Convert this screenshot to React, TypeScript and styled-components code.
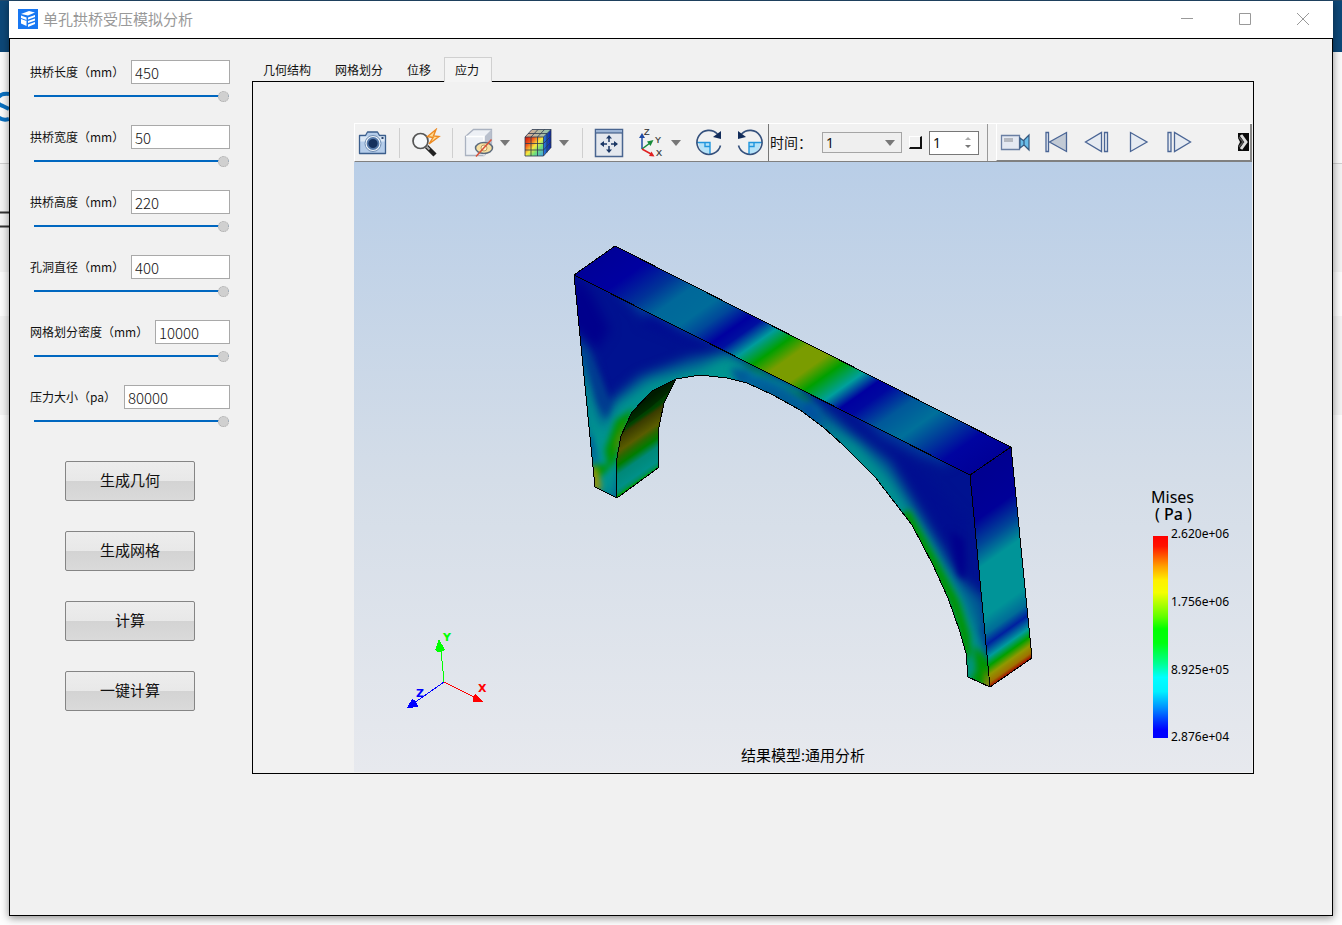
import React, { useState } from "react";
import styled, { createGlobalStyle } from "styled-components";

const sans = `"Noto Sans", "Noto Sans CJK SC", sans-serif`;
const cjk = `"Noto Sans CJK SC", "Noto Sans", sans-serif`;

const GlobalStyle = createGlobalStyle`
  *, *::before, *::after { box-sizing: border-box; }
  body { margin: 0; font-family: ${cjk}; color: #111; }
  button, input, select { font: inherit; color: inherit; margin: 0; }
`;

const Desktop = styled.div`
  position: relative;
  min-height: 100vh;
  padding: 1px 9px 9px;
  overflow: hidden;
  display: flex;
  background: linear-gradient(
    #234a6b 0 1px, #0d4878 1px 52px, #fafafa 52px 163px, #cfcfcf 163px 164px,
    #f3f3f3 164px 272px, #fcfcfc 272px 316px, #f3f3f3 316px 415px, #fdfdfd 415px
  );
`;

const BackdropArt = styled.svg`
  position: absolute;
  left: 0;
  top: 0;
`;

const Window = styled.div`
  position: relative;
  flex: 1;
  min-width: 0;
  display: flex;
  flex-direction: column;
  background: #f1f1f1;
  box-shadow: 0 2px 8px rgba(0, 0, 0, 0.45);
`;

const TitleBar = styled.header`
  height: 37px;
  flex: none;
  display: flex;
  align-items: center;
  padding: 0 20px 1px 9px;
  background: #fff;
  color: #999;
`;

const Title = styled.h1`
  flex: 1;
  margin: 0 0 0 5px;
  font-size: 15px;
  line-height: 20px;
  font-weight: 400;
`;

const CaptionButtons = styled.div`
  display: flex;
  gap: 38px;
`;

const PlainButton = styled.button`
  display: flex;
  align-items: center;
  padding: 0;
  border: 0;
  background: none;
`;

const Body = styled.main`
  flex: 1;
  display: flex;
  align-items: flex-start;
  gap: 22px;
  padding: 18px 78px 40px 20px;
  border: 1px solid #000;
`;

const Sidebar = styled.form`
  width: 200px;
  flex: none;
  padding-top: 3px;
`;

const Fields = styled.div`
  display: flex;
  flex-direction: column;
  gap: 23px;
`;

const FieldRow = styled.div`
  display: flex;
  align-items: center;
  justify-content: space-between;
  height: 24px;
  margin-bottom: 6px;
`;

const FieldLabel = styled.label`
  font-size: 12px;
  line-height: 16px;
  white-space: nowrap;
`;

const NumberBox = styled.input<{ $width: number }>`
  width: ${(p) => p.$width}px;
  height: 24px;
  padding: 0 3px;
  border: 1px solid #a9a9a9;
  border-radius: 0;
  background: #fff;
  font-size: 15px;
  line-height: 22px;
  font-weight: 300;
  outline: 0;
`;

const Slider = styled.input`
  display: block;
  width: 195px;
  height: 12px;
  margin-left: 4px;
  appearance: none;
  background: linear-gradient(#0067c0, #0067c0) center / 100% 2px no-repeat;
  &::-webkit-slider-thumb {
    appearance: none;
    width: 11px;
    height: 11px;
    border: 1px dotted #aaa;
    border-radius: 50%;
    background: #d0d0d0;
  }
`;

const Actions = styled.div`
  display: flex;
  flex-direction: column;
  align-items: center;
  gap: 30px;
  margin-top: 34px;
`;

const ActionButton = styled.button`
  width: 130px;
  height: 40px;
  padding: 0 0 2px;
  border: 1px solid #858585;
  border-radius: 2px;
  background: linear-gradient(#ededed, #e8e8e8 50%, #d3d3d3 50%, #dadada);
  font-size: 15px;
  line-height: 20px;
`;

const Results = styled.section`
  flex: 1;
  min-width: 0;
`;

const Tabs = styled.div`
  display: flex;
`;

const Tab = styled.button<{ $active: boolean }>`
  position: relative;
  height: 25px;
  margin-bottom: -1px;
  padding: 0 12px 0 10px;
  border: 1px solid ${(p) => (p.$active ? "#d0d0d0" : "transparent")};
  border-bottom: 0;
  background: ${(p) => (p.$active ? "#f4f4f4" : "transparent")};
  font-size: 12px;
  line-height: 16px;
`;

const Panel = styled.div`
  padding: 41px 1px 1px 101px;
  border: 1px solid #000;
`;

const Toolbar = styled.div`
  display: flex;
  height: 39px;
  border-top: 1px solid #fff;
  border-left: 1px solid #fff;
  border-bottom: 1px solid #808080;
`;

const ViewTools = styled.div`
  display: flex;
  align-items: center;
  gap: 11px;
  padding: 0 3px;
  border-right: 1px solid #777;
`;

const TimeTools = styled.div`
  display: flex;
  align-items: center;
  gap: 7px;
  padding: 0 8px 0 1px;
  border-right: 1px solid #999;
  font-size: 14px;
`;

const PlayTools = styled.div`
  flex: 1;
  min-width: 0;
  display: flex;
  align-items: center;
  gap: 11px;
  margin-left: 8px;
  padding: 0 1px 0 3px;
  border-left: 1px solid #fff;
  border-right: 2px solid #888;
  border-bottom: 1px solid #808080;
`;

const ToolButton = styled(PlainButton)<{ $menu?: boolean }>`
  width: ${(p) => (p.$menu ? 48 : 30)}px;
  height: 30px;
  flex: none;
  gap: 6px;
`;

const MoreButton = styled(PlainButton)`
  margin-left: auto;
`;

const Divider = styled.span`
  width: 1px;
  height: 30px;
  background: #cfcfcf;
`;

const TimeLabel = styled.label`
  width: 45px;
  padding-bottom: 2px;
  line-height: 20px;
  white-space: nowrap;
`;

const SelectWrap = styled.div`
  position: relative;
  width: 80px;
  height: 21px;
`;

const TimeSelect = styled.select`
  width: 100%;
  height: 100%;
  padding: 0 3px;
  border: 1px solid #a5a5a5;
  border-radius: 0;
  appearance: none;
  background: #efefef;
  font-family: ${sans};
  font-size: 14px;
  line-height: 19px;
`;

const Overlay = styled.svg`
  position: absolute;
  right: 7px;
  top: 50%;
  translate: 0 -50%;
  pointer-events: none;
`;

const LoopButton = styled.button`
  width: 13px;
  height: 13px;
  padding: 0;
  border: solid;
  border-width: 1px 2px 2px 1px;
  border-color: #fff #111 #111 #fff;
  background: #f1f1f1;
`;

const SpinWrap = styled.div`
  position: relative;
  width: 50px;
  height: 24px;
`;

const SpinBox = styled.input`
  width: 100%;
  height: 100%;
  padding: 0 3px;
  border: 1px solid #777;
  border-radius: 0;
  background: #fff;
  font-family: ${sans};
  font-size: 14px;
`;

const Viewport = styled.svg`
  display: block;
  width: 100%;
  height: 610px;
  background: linear-gradient(#b9cee7, #d4dde8 52%, #e7e9ee);
`;

const DownArrow = () => (
  <svg width="10" height="6"><path d="M0 0h10L5 6z" fill="#777" /></svg>
);

const Icon = ({ children }: { children: React.ReactNode }) => (
  <svg width="30" height="30" viewBox="0 0 30 30" fill="none">{children}</svg>
);

const CameraIcon = () => (
  <Icon>
    <path d="M1.500 7.500h6l2-3.500h10l2 3.500h6v18h-26z" fill="#b5cdea" stroke="#3b5e8c" strokeWidth="1.300" strokeLinejoin="round" />
    <path d="M2.500 8.500h24v5h-24z" fill="#dce8f5" />
    <circle cx="15" cy="15.500" r="8" fill="#eef4fa" stroke="#6f8db3" />
    <circle cx="15" cy="15.500" r="5.500" fill="#15305c" stroke="#5478a8" strokeWidth="1.800" />
    <path d="M23.500 10h2" stroke="#15305c" strokeWidth="1.800" />
  </Icon>
);

const ProbeIcon = () => (
  <Icon>
    <path d="M15.500 18.500l8.500 8.500" stroke="#222" strokeWidth="4.500" />
    <path d="M14.500 17.500l4 4" stroke="#aaa" strokeWidth="2" />
    <circle cx="9.500" cy="13" r="7.500" fill="#f6f8fa" stroke="#555" strokeWidth="1.700" />
    <path d="M25 1.500l-8.500 7 5.500 1-4 6.500L28 8.500l-5.500-.5z" fill="#ffdc94" stroke="#ed8a22" strokeWidth="1.400" />
  </Icon>
);

const HideIcon = () => (
  <Icon>
    <path d="M1.500 8.500l8-7h18v18l-7.500 8H1.500z" fill="#edf0f5" stroke="#aab2c0" strokeWidth="1.300" />
    <path d="M20 9l7.500-7.500v18L20 27.500z" fill="#b9c0cd" />
    <path d="M2 8.500h18v19" stroke="#fff" strokeWidth="1.500" />
    <ellipse cx="20" cy="20" rx="8.500" ry="5.500" fill="#f7dfa0" stroke="#5b6a7c" strokeWidth="1.500" />
    <circle cx="20" cy="20" r="3" fill="#fff2c4" stroke="#b89c66" />
    <path d="M27.500 11.500L12 28.500" stroke="#d95037" strokeWidth="1.500" />
  </Icon>
);

const MeshIcon = () => (
  <Icon>
    <defs>
      <linearGradient id="meshFront" x1="0" y1="0" x2="1" y2="1">
        <stop offset="0" stopColor="#c8140c" /><stop offset=".25" stopColor="#f0501a" />
        <stop offset=".5" stopColor="#f6e940" /><stop offset=".7" stopColor="#6fe07b" />
        <stop offset="1" stopColor="#3f9cf0" />
      </linearGradient>
      <linearGradient id="meshSide">
        <stop offset="0" stopColor="#2a7be0" /><stop offset="1" stopColor="#0a1f9c" />
      </linearGradient>
      <linearGradient id="meshTop">
        <stop offset="0" stopColor="#e0a890" /><stop offset="1" stopColor="#8fc8b0" />
      </linearGradient>
    </defs>
    <path d="M2 9l7-7.500h19L20.500 9z" fill="url(#meshTop)" />
    <path d="M2 9h18.500v19H2z" fill="url(#meshFront)" />
    <path d="M20.500 9L28 1.500v18L20.500 28z" fill="url(#meshSide)" />
    <path d="M2 9l7-7.500h19v18L20.500 28H2zM2 9h18.500v19M20.500 9L28 1.500M8 9v19M14.500 9v19M2 15.500h18.500L28 8M2 22h18.500l7.500-8M8 9l7-7.500M14.500 9l7-7.500M5 5.500h19v19" stroke="#2c3a50" strokeWidth=".8" />
  </Icon>
);

const FitIcon = () => (
  <Icon>
    <path d="M1.500 1.500h27v27h-27z" fill="#e4e8ee" stroke="#496590" strokeWidth="1.500" />
    <path d="M2 2h26v3H2z" fill="#9db5d6" />
    <path d="M2 5h26" stroke="#2d4a78" />
    <path d="M15 14V8M15 18v6M13 16H7M17 16h6" stroke="#1b3765" strokeWidth="1.500" />
    <path d="M12 10.500l3-3.500 3 3.500zM12 21.500l3 3.500 3-3.500zM10 13l-4 3 4 3zM20 13l4 3-4 3z" fill="#1b3765" />
  </Icon>
);

const AxesIcon = () => (
  <Icon>
    <path d="M7 21V9" stroke="#1f4aa5" strokeWidth="1.500" /><path d="M4 10l3-5 3 5z" fill="#1f4aa5" />
    <path d="M7 21l8-6" stroke="#178a3a" strokeWidth="1.500" /><path d="M12 13.500l6.500-1.500-3 6z" fill="#178a3a" />
    <path d="M7 21l9 5" stroke="#e02020" strokeWidth="1.500" /><path d="M14 28l5.500.5-3-5z" fill="#e02020" />
    <g fill="#333" fontFamily="Liberation Sans" fontSize="9" stroke="#333" strokeWidth=".2">
      <text x="9" y="7">Z</text><text x="20" y="15">Y</text><text x="21" y="28">X</text>
    </g>
  </Icon>
);

const RotateIcon = ({ flip }: { flip?: boolean }) => (
  <Icon>
    <g transform={flip ? "matrix(-1 0 0 1 30 0)" : undefined}>
      <path d="M5 14.500h11v12C9 26.500 4.500 21.500 4.500 14.500z" fill="#b4e2f8" />
      <path d="M3 14.500h13v12M11 14.500v4h5" stroke="#2096dd" strokeWidth="1.400" />
      <path d="M23.500 6A12 12 0 1 0 26.500 17.500" stroke="#35517d" strokeWidth="1.600" />
      <path d="M27 3v8l-8-2z" fill="#122c5a" />
    </g>
  </Icon>
);

const VideoIcon = () => (
  <Icon>
    <path d="M1.500 8.500h18v14h-18z" fill="#e4e9f2" stroke="#6a7fa3" strokeWidth="1.300" />
    <path d="M4 11h9v4H4z" fill="#b4b8c0" />
    <path d="M20 11l4 3v4l-4 3zM29 8v15l-5-5v-5z" fill="#69bde8" stroke="#34587f" strokeWidth="1.200" />
  </Icon>
);

const PlayIcon = ({ kind }: { kind: "first" | "back" | "play" | "next" }) => (
  <Icon>
    <g fill="#e6ebf2" stroke="#4a6595" strokeWidth="1.300">
      {kind === "first" && <><path d="M5 5.500h2.500v19H5z" /><path d="M25.500 5.500v19L8.500 15z" fill="#c2cad5" /></>}
      {kind === "back" && <><path d="M19.500 5.500v19L3.500 15zM22.500 5.500h3v19h-3z" /></>}
      {kind === "play" && <path d="M7.500 5.500v19L24 15z" />}
      {kind === "next" && <path d="M10.500 5.500v19L26.500 15zM4 5.500h3v19H4z" />}
    </g>
  </Icon>
);

const frontFace =
  "M574 275L970 475L990 687L968 677L966 653L960 632L948 598L933 565L912 525L875 477L843 445L823 427L800 410L773 395L747 383L727 378L700 375L676 379L652 391L632 412L621 436L617 458L616 475L617 498L595 487Z";
const innerFace = "M676 379L664 403L659 427L658 448L658 468L617 498L616 475L617 458L621 436L632 412L652 391Z";
const topFace = "M574 275L615 246L1011 447L970 475Z";
const endFace = "M970 475L1011 447L1032 658L990 687Z";

type Stop = [number, string];
const topStops: Stop[] = [
  [0, "#000098"], [0.08, "#0000a0"], [0.15, "#003498"], [0.2, "#00689a"], [0.26, "#006c9a"],
  [0.3, "#00489a"], [0.345, "#0000a0"], [0.37, "#0010a0"], [0.41, "#009c9c"], [0.45, "#00a000"],
  [0.49, "#7a9c00"], [0.54, "#7a9c00"], [0.58, "#00a000"], [0.63, "#00a09c"], [0.67, "#0000a0"],
  [0.7, "#0008a0"], [0.76, "#00589a"], [0.82, "#00709a"], [0.87, "#00409a"], [0.93, "#0004a0"], [1, "#000098"],
];
const endStops: Stop[] = [
  [0, "#000090"], [0.22, "#000098"], [0.34, "#004898"], [0.44, "#009498"], [0.67, "#009498"],
  [0.75, "#006c98"], [0.8, "#0020a0"], [0.86, "#009c9c"], [0.9, "#00a000"], [0.94, "#909800"],
  [0.975, "#a07000"], [1, "#a00000"],
];
const innerStops: Stop[] = [
  [0, "#002400"], [0.18, "#004400"], [0.24, "#3a3c00"], [0.42, "#5a5c00"], [0.5, "#2c6800"],
  [0.6, "#007c00"], [0.72, "#008878"], [0.9, "#009088"], [0.96, "#009060"], [1, "#009c00"],
];
const legendStops: Stop[] = [
  [0, "#ff0000"], [0.05, "#ff1200"], [0.15, "#ffa000"], [0.22, "#fff000"], [0.28, "#f4ff00"],
  [0.4, "#60ff00"], [0.46, "#00ff00"], [0.53, "#00ff10"], [0.63, "#00ff90"], [0.7, "#00ffff"],
  [0.77, "#00f0ff"], [0.85, "#0090ff"], [0.92, "#0030ff"], [0.96, "#0000ff"], [1, "#0000ff"],
];
const stops = (list: Stop[]) => list.map(([o, c]) => <stop key={o} offset={o} stopColor={c} />);

const StressView = () => (
  <Viewport viewBox="354 162 898 610" role="img" aria-label="Mises 应力云图">
    <defs>
      <linearGradient id="top" gradientUnits="userSpaceOnUse" x1="574" y1="275" x2="800" y2="595">{stops(topStops)}</linearGradient>
      <linearGradient id="end" gradientUnits="userSpaceOnUse" x1="970" y1="475" x2="1077" y2="626">{stops(endStops)}</linearGradient>
      <linearGradient id="inner" gradientUnits="userSpaceOnUse" x1="650" y1="397" x2="686" y2="449">{stops(innerStops)}</linearGradient>
      <linearGradient id="scale" x2="0" y2="1">{stops(legendStops)}</linearGradient>
      <clipPath id="frontClip"><path d={frontFace} /></clipPath>
      <filter id="soft" colorInterpolationFilters="sRGB" filterUnits="userSpaceOnUse" x="540" y="220" width="520" height="500"><feGaussianBlur stdDeviation="6" /></filter>
      <filter id="fine" colorInterpolationFilters="sRGB" filterUnits="userSpaceOnUse" x="540" y="220" width="520" height="500"><feGaussianBlur stdDeviation="3" /></filter>
    </defs>
    <g clipPath="url(#frontClip)">
      <path d={frontFace} fill="#001290" />
      <g filter="url(#soft)">
        <path d="M574 275L590 290L610 330L596 350L560 330Z" fill="#00008c" />
        <path d="M612 282L690 322L735 350L700 336L645 318Z" fill="#00489a" />
        <path d="M850 404L945 450L950 466L920 456L880 436Z" fill="#003c9a" />
        <path d="M574 330L588 350L606 412L612 400L640 376L690 358L722 352L752 362L800 384L823 408L850 432L890 462L930 530L962 580L985 600L1000 700L960 690L600 510L585 480Z" fill="#005c94" />
        <path d="M574 355L590 390L602 430L614 405L650 380L700 368L730 352L760 376L740 400L640 420L612 500L590 490Z" fill="#009490" />
        <path d="M812 414L858 444L890 478L925 530L945 565L965 600L980 640L995 700L955 690L940 600L900 520L850 460Z" fill="#009490" />
        <path d="M826 404L880 440L930 515L950 565L966 575L966 520L920 470Z" fill="#000e90" />
        <path d="M640 322L715 352L700 340L650 312Z" fill="#000890" />
      </g>
      <g filter="url(#fine)">
        <path d="M584 345L600 378L611 405L606 420L597 400Z" fill="#003c90" />
        <path d="M590 430L596 455L598 470L588 445Z" fill="#0050a0" />
        <path d="M730 368L738 385L765 388L748 370Z" fill="#005c98" />
        <path d="M745 362L770 378L810 400" stroke="#008020" strokeWidth="3" fill="none" />
        <path d="M745 376L780 388L818 412" stroke="#0064a0" strokeWidth="6" fill="none" />
        <path d="M755 372L800 392" stroke="#0098a0" strokeWidth="2" fill="none" />
        <path d="M808 400L826 426L802 412Z" fill="#0050a0" />
        <path d="M950 530L958 575L966 580L964 540Z" fill="#00008c" />
        <path d="M980 628L984 642L992 650V620Z" fill="#004898" />
        <path d="M634 408L616 420L605 450L608 465L592 465L594 480L602 475L615 462Z" fill="#009400" />
        <path d="M626 418L616 440L614 456L622 440Z" fill="#6c8800" />
        <path d="M590 466L597 468L601 485L600 492L592 488Z" fill="#a09400" />
        <path d="M905 512L935 566L955 604L965 636L967 668" stroke="#009400" strokeWidth="10" fill="none" />
        <path d="M974 645L992 664V690L966 680L976 672Z" fill="#009400" />
        <path d="M966 652L974 664L972 680H964Z" fill="#009480" />
        <path d="M986 668L984 690L994 690Z" fill="#b08000" />
      </g>
    </g>
    <path d={innerFace} fill="url(#inner)" />
    <path d="M632 412L652 391L676 379L670 391L650 408L628 424Z" fill="#000" opacity=".25" />
    <path d={topFace} fill="url(#top)" />
    <path d={endFace} fill="url(#end)" />
    <g fill="none" stroke="#000" strokeWidth="1" strokeLinejoin="round" shapeRendering="crispEdges">
      <path d={frontFace} /><path d={innerFace} /><path d={topFace} /><path d={endFace} />
    </g>

    <g shapeRendering="crispEdges">
      <path d="M444 682L441 650" stroke="#0f0" /><path d="M439 639l-4 11q5 4 10 0z" fill="#0f0" />
      <path d="M444 682L474 697" stroke="red" /><path d="M483 702l-10 0q-1-5 3-8z" fill="red" />
      <path d="M444 682L414 703" stroke="blue" /><path d="M407 708l5-9q5 2 6 8z" fill="blue" />
    </g>
    <g fontFamily="DejaVu Sans" fontWeight="700" fontSize="11">
      <text x="443" y="641" fill="#0f0">Y</text>
      <text x="478" y="692" fill="red">X</text>
      <text x="416" y="697" fill="blue">Z</text>
    </g>

    <g fontFamily={sans} fill="#000">
      <text x="1151" y="503" fontSize="16">Mises</text>
      <text x="1155" y="520" fontSize="16" xmlSpace="preserve">( <tspan fontWeight="500">Pa</tspan> )</text>
      <rect x="1153" y="536" width="15" height="202" fill="url(#scale)" />
      <g fontSize="12">
        <text x="1171" y="538">2.620e+06</text>
        <text x="1171" y="606">1.756e+06</text>
        <text x="1171" y="674">8.925e+05</text>
        <text x="1171" y="741">2.876e+04</text>
      </g>
      <text x="803" y="761" fontSize="15" textAnchor="middle">结果模型:通用分析</text>
    </g>
  </Viewport>
);

const fields = [
  { id: "length", label: "拱桥长度（mm）", value: 450, width: 99 },
  { id: "width", label: "拱桥宽度（mm）", value: 50, width: 99 },
  { id: "height", label: "拱桥高度（mm）", value: 220, width: 99 },
  { id: "hole", label: "孔洞直径（mm）", value: 400, width: 99 },
  { id: "mesh", label: "网格划分密度（mm）", value: 10000, width: 75 },
  { id: "load", label: "压力大小（pa）", value: 80000, width: 106 },
];
const actions = ["生成几何", "生成网格", "计算", "一键计算"];
const tabs = ["几何结构", "网格划分", "位移", "应力"];

const Field = ({ id, label, value, width }: (typeof fields)[number]) => {
  const [current, setCurrent] = useState(String(value));
  const update = (e: React.ChangeEvent<HTMLInputElement>) => setCurrent(e.target.value);
  return (
    <div>
      <FieldRow>
        <FieldLabel htmlFor={id}>{label}</FieldLabel>
        <NumberBox id={id} $width={width} value={current} onChange={update} />
      </FieldRow>
      <Slider type="range" aria-label={label} min={0} max={value} value={Number(current) || 0} onChange={update} />
    </div>
  );
};

export default function App() {
  const [active, setActive] = useState("应力");
  return (
    <Desktop>
      <GlobalStyle />
      <BackdropArt width="9" height="240" aria-hidden="true">
        <path d="M9 94Q0 93-3 99Q-4 104 3 106L9 109M-2 117Q3 121 9 119" fill="none" stroke="#0a70c0" strokeWidth="4" />
        <path d="M0 212.500h9M0 226.500h9" stroke="#333" strokeWidth="2" />
      </BackdropArt>
      <Window>
        <TitleBar>
          <svg width="20" height="20" viewBox="0 0 20 20">
            <path d="M0 0h20v20H0z" fill="#1877f2" />
            <path d="M3 5l8-3 6 1.500-7 3zM3 6.500l5.500 2V17L3 14.500zM10 8.500l7-2.500v2l-7 2.500zM10 12l7-2.500v2l-7 2.500zM10 15.500l7-2.500v2L10 18z" fill="#fff" />
            <path d="M3 9.500l5.500 2" stroke="#1877f2" />
          </svg>
          <Title>单孔拱桥受压模拟分析</Title>
          <CaptionButtons>
            {[["最小化", "M4 9.500h12"], ["最大化", "M4.500 4.500h11v11h-11z"], ["关闭", "M4 4l12 12M16 4L4 16"]].map(([name, d]) => (
              <PlainButton key={name} aria-label={name}>
                <svg width="20" height="20"><path d={d} fill="none" stroke="#999" /></svg>
              </PlainButton>
            ))}
          </CaptionButtons>
        </TitleBar>
        <Body>
          <Sidebar onSubmit={(e) => e.preventDefault()}>
            <Fields>{fields.map((f) => <Field key={f.id} {...f} />)}</Fields>
            <Actions>{actions.map((a) => <ActionButton key={a} type="button">{a}</ActionButton>)}</Actions>
          </Sidebar>
          <Results>
            <Tabs role="tablist">
              {tabs.map((t) => (
                <Tab key={t} role="tab" aria-selected={t === active} $active={t === active} onClick={() => setActive(t)}>{t}</Tab>
              ))}
            </Tabs>
            <Panel>
              <Toolbar>
                <ViewTools>
                  <ToolButton aria-label="截图"><CameraIcon /></ToolButton>
                  <Divider />
                  <ToolButton aria-label="查询"><ProbeIcon /></ToolButton>
                  <Divider />
                  <ToolButton $menu aria-label="隐藏"><HideIcon /><DownArrow /></ToolButton>
                  <ToolButton $menu aria-label="显示方式"><MeshIcon /><DownArrow /></ToolButton>
                  <Divider />
                  <ToolButton aria-label="适应窗口"><FitIcon /></ToolButton>
                  <ToolButton $menu aria-label="视图方向"><AxesIcon /><DownArrow /></ToolButton>
                  <ToolButton aria-label="顺时针旋转"><RotateIcon /></ToolButton>
                  <ToolButton aria-label="逆时针旋转"><RotateIcon flip /></ToolButton>
                </ViewTools>
                <TimeTools>
                  <TimeLabel htmlFor="time">时间：</TimeLabel>
                  <SelectWrap>
                    <TimeSelect id="time"><option>1</option></TimeSelect>
                    <Overlay width="10" height="6"><path d="M0 0h10L5 6z" fill="#777" /></Overlay>
                  </SelectWrap>
                  <LoopButton aria-label="循环" />
                  <SpinWrap>
                    <SpinBox aria-label="帧" defaultValue="1" />
                    <Overlay width="8" height="14"><path d="M1 4h6L4 1z" fill="#aaa" /><path d="M1 9h6l-3 3z" fill="#777" /></Overlay>
                  </SpinWrap>
                </TimeTools>
                <PlayTools>
                  <ToolButton aria-label="录制"><VideoIcon /></ToolButton>
                  <ToolButton aria-label="第一帧"><PlayIcon kind="first" /></ToolButton>
                  <ToolButton aria-label="上一帧"><PlayIcon kind="back" /></ToolButton>
                  <ToolButton aria-label="播放"><PlayIcon kind="play" /></ToolButton>
                  <ToolButton aria-label="下一帧"><PlayIcon kind="next" /></ToolButton>
                  <MoreButton aria-label="更多">
                    <svg width="11" height="18">
                      <path d="M0 0h11v18H0z" fill="#0a0a0a" />
                      <path d="M0 5l2 4-2 4z" fill="#eee" />
                      <path d="M3 2l5 7-5 7" fill="none" stroke="#ddd" strokeWidth="3" />
                      <path d="M1 4l4 5-4 5" fill="none" stroke="#555" strokeWidth="1.500" />
                    </svg>
                  </MoreButton>
                </PlayTools>
              </Toolbar>
              <StressView />
            </Panel>
          </Results>
        </Body>
      </Window>
    </Desktop>
  );
}
